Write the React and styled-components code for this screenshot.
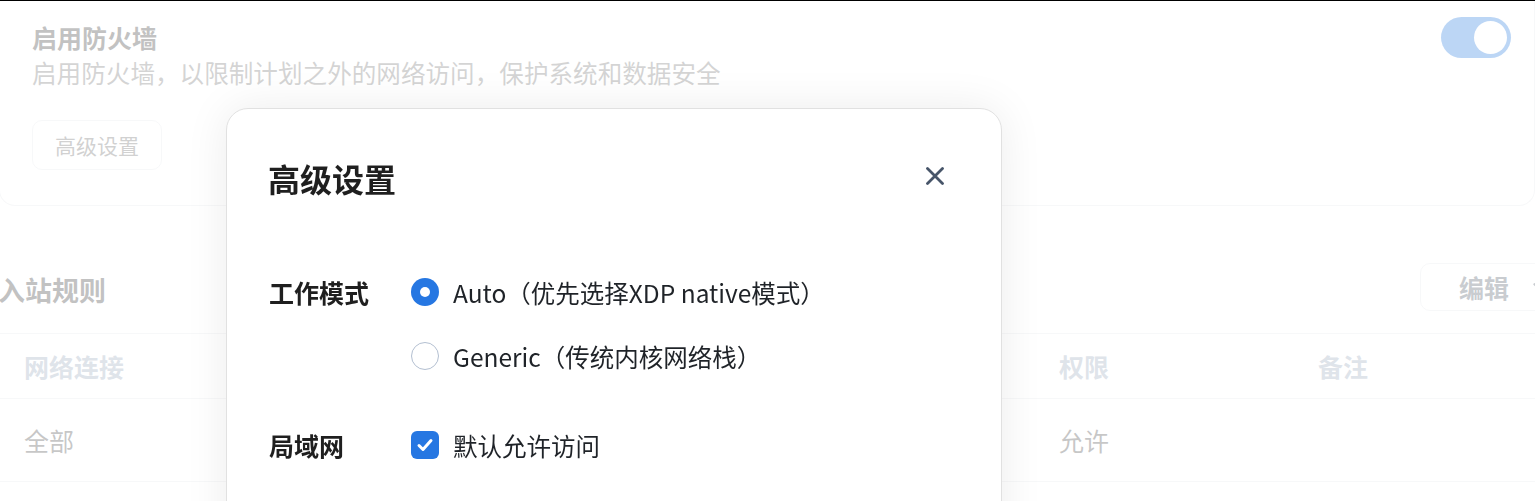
import React, { useState } from 'react';
import styled, { createGlobalStyle } from 'styled-components';
import { ChevronDown } from 'lucide-react';

const GlobalStyle = createGlobalStyle`
  * { box-sizing: border-box; }
  html, body {
    margin: 0;
    padding: 0;
    background: #fff;
    overflow: hidden;
  }
  body {
    border-top: 1px solid #000;
    font-family: "Noto Sans CJK SC", "Noto Sans", sans-serif;
    color: #333;
  }
`;

const Page = styled.div`
  height: 500px;
  overflow: hidden;
`;

const Card = styled.section`
  display: flex;
  justify-content: space-between;
  align-items: flex-start;
  margin-left: -1px;
  padding: 19px 23px 35px 32px;
  border: 1px solid #e5e7eb;
  border-top: none;
  border-radius: 0 0 16px 16px;
`;

const CardText = styled.div`
  display: flex;
  flex-direction: column;
  align-items: flex-start;
`;

const CardTitle = styled.div`
  font-size: 25px;
  font-weight: 700;
  line-height: 34px;
  color: #333;
`;

const CardDesc = styled.div`
  margin-top: 1px;
  font-size: 24.6px;
  line-height: 34px;
  color: #707070;
`;

const GhostButton = styled.button`
  display: inline-flex;
  align-items: center;
  gap: ${p => p.$gap || 18}px;
  height: ${p => p.$h || 50}px;
  margin-top: ${p => p.$mt || 0}px;
  padding: 0 ${p => p.$px || 22}px;
  border: 1px solid #e5e7eb;
  border-radius: 10px;
  background: #fff;
  font-family: inherit;
  font-size: ${p => p.$fs || 21}px;
  font-weight: ${p => (p.$bold ? 700 : 400)};
  color: ${p => (p.$bold ? '#4b5563' : '#666')};
  cursor: pointer;
`;

const Toggle = styled.div`
  width: 70px;
  height: 41px;
  margin-top: -3px;
  padding: 4px;
  border-radius: 21px;
  background: #2076de;
  display: flex;
  justify-content: flex-end;

  &::after {
    content: '';
    width: 33px;
    height: 33px;
    border-radius: 50%;
    background: #fff;
  }
`;

const Section = styled.section`
  margin-top: 57px;
  margin-right: -55px;
`;

const SectionHead = styled.div`
  display: flex;
  justify-content: space-between;
  align-items: center;
  height: 48px;
`;

const SectionTitle = styled.h2`
  margin: 6px 0 0 -2px;
  font-size: 27px;
  font-weight: 700;
  line-height: 40px;
  color: #333;
`;

const Table = styled.div`
  margin-top: 22px;
  margin-right: 55px;
`;

const TableRow = styled.div`
  display: grid;
  grid-template-columns: 345px 345px 345px 259px 1fr;
  align-items: center;
  height: ${p => (p.$head ? 65 : 84)}px;
  border-top: 1px solid #e5e7eb;
  border-bottom: ${p => (p.$last ? '1px solid #e5e7eb' : 'none')};
`;

const Cell = styled.div`
  padding-left: 24px;
  font-size: 25px;
  line-height: 36px;
  font-weight: ${p => (p.$head ? 700 : 400)};
  color: ${p => (p.$head ? '#94a3b8' : '#444')};
`;

const Overlay = styled.div`
  position: fixed;
  top: 1px;
  left: 0;
  right: 0;
  bottom: 0;
  background: rgba(255, 255, 255, 0.7);
`;

const Modal = styled.div`
  position: fixed;
  left: 226px;
  top: 108px;
  width: 776px;
  height: 460px;
  padding: 49px 42px 0;
  background: #fff;
  border: 1px solid #e1e1e1;
  border-radius: 22px;
  box-shadow: 0 0 44px rgba(0, 0, 0, 0.08);
`;

const ModalHead = styled.div`
  display: flex;
  justify-content: space-between;
  align-items: center;
  height: 40px;
`;

const ModalTitle = styled.h3`
  margin: 0 0 0 -1px;
  font-size: 32px;
  font-weight: 700;
  line-height: 40px;
  color: #1f1f1f;
`;

const CloseButton = styled.button`
  display: flex;
  margin: -4px 15px 0 0;
  padding: 0;
  border: none;
  background: none;
  cursor: pointer;
`;

const Form = styled.div`
  margin-top: 74px;
  display: flex;
  flex-direction: column;
  gap: 49px;
`;

const FormRow = styled.div`
  display: grid;
  grid-template-columns: 142px 1fr;
`;

const Label = styled.div`
  font-size: 25px;
  font-weight: 700;
  line-height: 40px;
  color: #1f1f1f;
`;

const Options = styled.div`
  display: flex;
  flex-direction: column;
  gap: 24px;
`;

const Option = styled.label`
  display: flex;
  align-items: center;
  gap: 14px;
  height: 40px;
  font-size: 24.5px;
  color: #1f2328;
  cursor: pointer;
`;

const Radio = styled.span`
  width: 28px;
  height: 28px;
  flex: none;
  border-radius: 50%;
  border: ${p => (p.$on ? 'none' : '1px solid #b3bfd1')};
  background: ${p => (p.$on ? '#2677e2' : '#fff')};
  display: flex;
  align-items: center;
  justify-content: center;

  &::after {
    content: '';
    display: ${p => (p.$on ? 'block' : 'none')};
    width: 10px;
    height: 10px;
    border-radius: 50%;
    background: #fff;
  }
`;

const CheckBox = styled.span`
  width: 28px;
  height: 28px;
  flex: none;
  border-radius: 6px;
  background: #2677e2;
  display: flex;
  align-items: center;
  justify-content: center;
`;

const modes = [
  { id: 'auto', text: 'Auto（优先选择XDP native模式）' },
  { id: 'generic', text: 'Generic（传统内核网络栈）' },
];

const App = () => {
  const [mode, setMode] = useState('auto');

  return (
    <>
      <GlobalStyle />
      <Page>
        <Card>
          <CardText>
            <CardTitle>启用防火墙</CardTitle>
            <CardDesc>启用防火墙，以限制计划之外的网络访问，保护系统和数据安全</CardDesc>
            <GhostButton $mt={31}>高级设置</GhostButton>
          </CardText>
          <Toggle />
        </Card>

        <Section>
          <SectionHead>
            <SectionTitle>入站规则</SectionTitle>
            <GhostButton $h={48} $px={38} $fs={25} $gap={20} $bold>
              编辑
              <ChevronDown size={22} color="#4b5563" strokeWidth={2.5} />
            </GhostButton>
          </SectionHead>
          <Table>
            <TableRow $head>
              <Cell $head>网络连接</Cell>
              <Cell $head>协议</Cell>
              <Cell $head>端口</Cell>
              <Cell $head>权限</Cell>
              <Cell $head>备注</Cell>
            </TableRow>
            <TableRow $last>
              <Cell>全部</Cell>
              <Cell>全部</Cell>
              <Cell>全部</Cell>
              <Cell>允许</Cell>
              <Cell />
            </TableRow>
          </Table>
        </Section>
      </Page>

      <Overlay />
      <Modal>
        <ModalHead>
          <ModalTitle>高级设置</ModalTitle>
          <CloseButton aria-label="关闭">
            <svg width="18" height="18" viewBox="0 0 18 18">
              <path d="M1.5 1.5L16.5 16.5M16.5 1.5L1.5 16.5" stroke="#475569" strokeWidth="2.8" strokeLinecap="round" />
            </svg>
          </CloseButton>
        </ModalHead>
        <Form>
          <FormRow>
            <Label>工作模式</Label>
            <Options>
              {modes.map(m => (
                <Option key={m.id} onClick={() => setMode(m.id)}>
                  <Radio $on={mode === m.id} />
                  {m.text}
                </Option>
              ))}
            </Options>
          </FormRow>
          <FormRow>
            <Label>局域网</Label>
            <Options>
              <Option>
                <CheckBox>
                  <svg width="20" height="20" viewBox="0 0 20 20">
                    <path d="M4 10.5L8 14.5L16 5.5" fill="none" stroke="#fff" strokeWidth="3" strokeLinecap="round" strokeLinejoin="round" />
                  </svg>
                </CheckBox>
                默认允许访问
              </Option>
            </Options>
          </FormRow>
        </Form>
      </Modal>
    </>
  );
};

export default App;
